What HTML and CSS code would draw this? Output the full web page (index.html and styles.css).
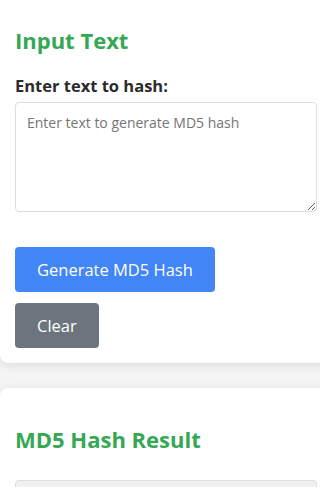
FILE: index.html
```html
<!DOCTYPE html>
<html lang="en">
<head>
<meta charset="utf-8">
<title>MD5 Hash Generator</title>
<link rel="stylesheet" href="styles.css">
</head>
<body>
<main class="page">
  <section class="card">
    <h2 class="card-title">Input Text</h2>
    <label class="field-label" for="input-text">Enter text to hash:</label>
    <textarea id="input-text" class="text-input" placeholder="Enter text to generate MD5 hash"></textarea>
    <div class="actions">
      <button class="btn btn-primary" type="button">Generate MD5 Hash</button>
      <button class="btn btn-secondary" type="button">Clear</button>
    </div>
  </section>
  <section class="card">
    <h2 class="card-title">MD5 Hash Result</h2>
    <div class="result-box"></div>
  </section>
</main>
</body>
</html>
```

FILE: styles.css
```css
html, body {
  margin: 0;
  padding: 0;
}
body {
  background: #f4f4f4;
  font-family: "Open Sans", "Noto Sans", sans-serif;
  color: #333;
  overflow: hidden;
}
.page {
  width: 332px;
  margin-top: -11px;
}
.card {
  background: #fff;
  border-radius: 8px;
  box-shadow: 0 2px 10px rgba(0, 0, 0, 0.1);
  padding: 15px;
  margin-bottom: 25px;
}
.card-title {
  color: #34a853;
  font-size: 22px;
  font-weight: 700;
  line-height: 32px;
  margin: 20px 0;
}
.field-label {
  display: block;
  font-size: 16.5px;
  font-weight: 700;
  line-height: 20px;
  color: #2b2b2b;
  margin-bottom: 6px;
}
.text-input {
  display: block;
  box-sizing: border-box;
  width: 302px;
  height: 110px;
  padding: 10px 11px;
  border: 1px solid #ddd;
  border-radius: 4px;
  font-family: inherit;
  font-size: 14px;
  margin: 0 0 35px;
}
.text-input::placeholder {
  color: #757575;
}
.actions {
  display: flex;
  flex-direction: column;
  align-items: flex-start;
  gap: 11px;
}
.btn {
  height: 45px;
  padding: 0 22px;
  border: none;
  border-radius: 4px;
  color: #fff;
  font-family: inherit;
  font-size: 16.5px;
}
.btn-primary {
  background: #4285f4;
}
.btn-secondary {
  background: #6c757d;
}
.result-box {
  height: 60px;
  margin-top: 25px;
  background: #f0f0f0;
  border: 1px solid #ddd;
  border-radius: 4px;
}
```
